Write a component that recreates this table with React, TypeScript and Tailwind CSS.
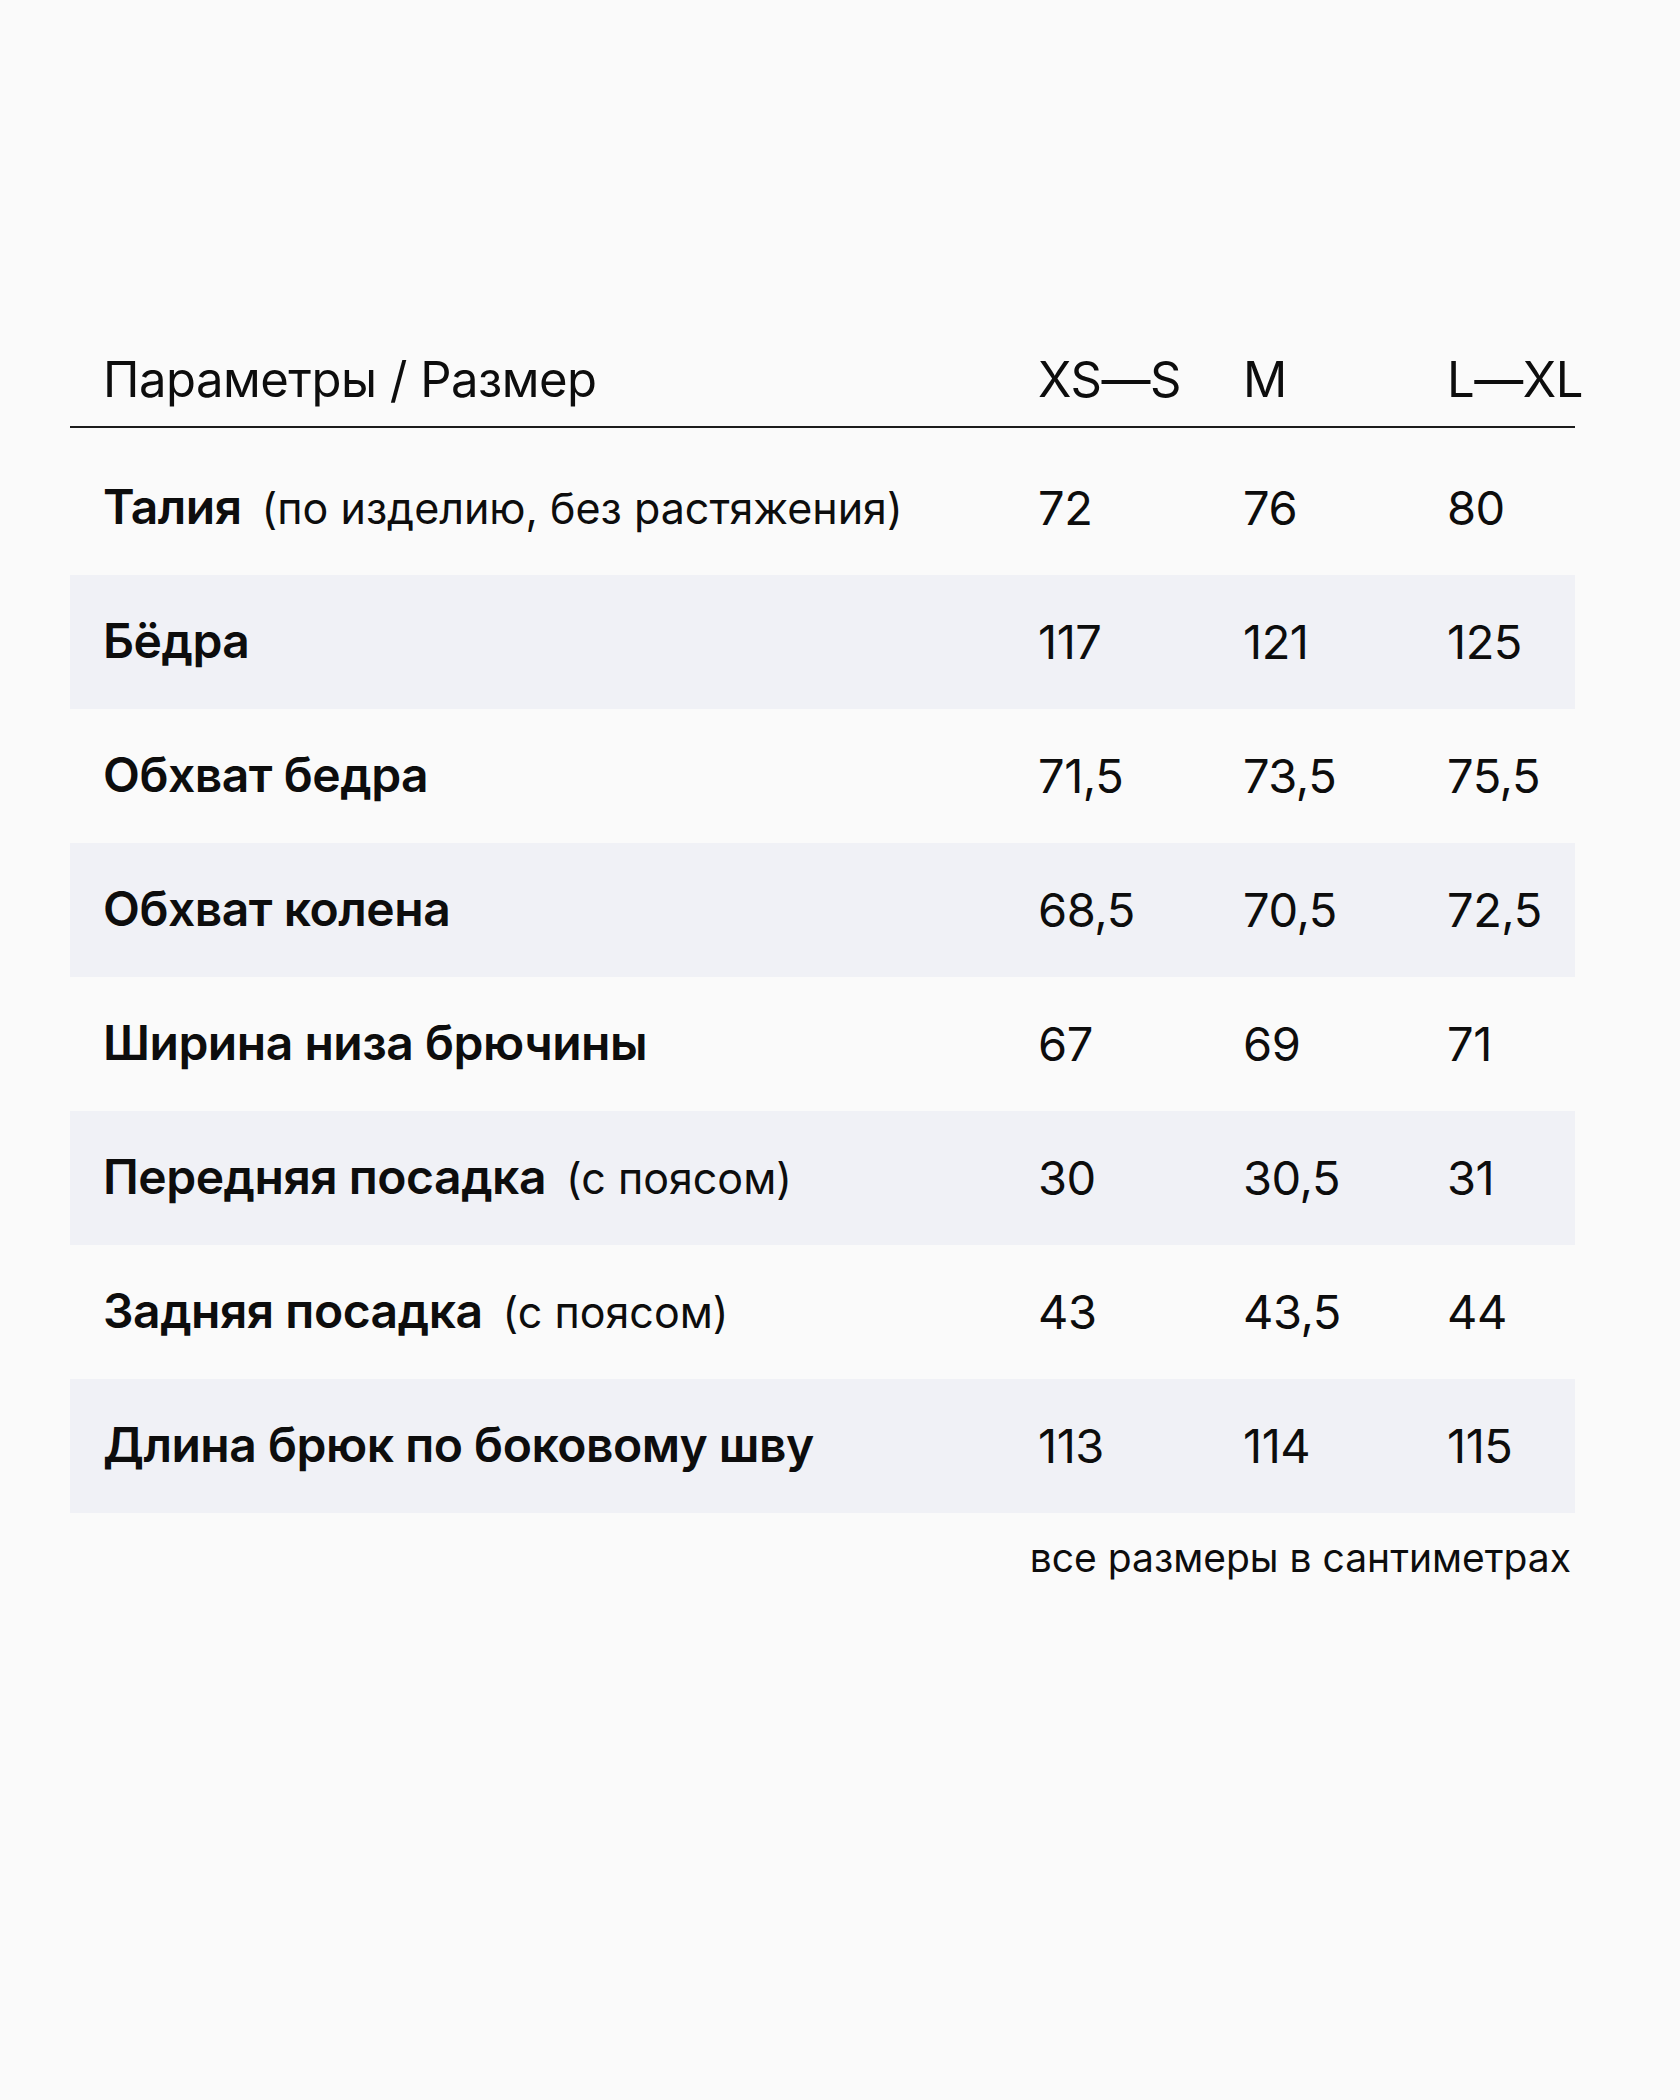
const sizes = ['XS—S', 'M', 'L—XL'];

type Row = { name: string; note?: string; values: string[] };

const rows: Row[] = [
  { name: 'Талия', note: '(по изделию, без растяжения)', values: ['72', '76', '80'] },
  { name: 'Бёдра', values: ['117', '121', '125'] },
  { name: 'Обхват бедра', values: ['71,5', '73,5', '75,5'] },
  { name: 'Обхват колена', values: ['68,5', '70,5', '72,5'] },
  { name: 'Ширина низа брючины', values: ['67', '69', '71'] },
  { name: 'Передняя посадка', note: '(с поясом)', values: ['30', '30,5', '31'] },
  { name: 'Задняя посадка', note: '(с поясом)', values: ['43', '43,5', '44'] },
  { name: 'Длина брюк по боковому шву', values: ['113', '114', '115'] },
];

const grid = 'grid grid-cols-[935px_205px_204px_1fr] items-center pl-[33px]';

export default function App() {
  return (
    <div className="min-h-[2100px] w-full bg-[#fafafa] font-['Inter','Liberation_Sans',sans-serif] text-[#0d0d0d]">
      <div className="ml-[70px] w-[1505px] pt-[332px]">
        <div className={`${grid} h-[96px] border-b-2 border-[#1c1c1c] text-[49px] leading-none tracking-[-0.01em]`}>
          <div>Параметры / Размер</div>
          {sizes.map((s) => (
            <div key={s} className="whitespace-nowrap">
              {s}
            </div>
          ))}
        </div>

        <div className="mt-[13px]">
          {rows.map((row, i) => (
            <div
              key={row.name}
              className={`${grid} h-[134px] pb-[2px] ${i % 2 === 1 ? 'bg-[#f0f1f6]' : ''}`}
            >
              <div className="flex items-baseline whitespace-nowrap">
                <span className="text-[48px] font-semibold leading-none tracking-[-0.01em]">{row.name}</span>
                {row.note && <span className="ml-[20px] text-[43px] leading-none">{row.note}</span>}
              </div>
              {row.values.map((v, j) => (
                <div key={j} className="text-[47px] leading-none tracking-[-0.01em]">
                  {v}
                </div>
              ))}
            </div>
          ))}
        </div>

        <div className="mt-[25px] pr-[4px] text-right text-[39px] leading-none">все размеры в сантиметрах</div>
      </div>
    </div>
  );
}
